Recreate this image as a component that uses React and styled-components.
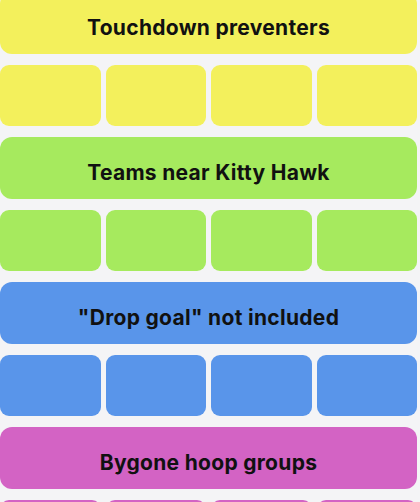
import React from 'react';
import styled, { createGlobalStyle } from 'styled-components';

const GlobalStyle = createGlobalStyle`
    html, body {
        margin: 0;
        padding: 0;
        background: #f4f4f6;
        overflow: hidden;
    }
`;

const Board = styled.div`
    width: 417px;
    margin-top: -8px;
    display: flex;
    flex-direction: column;
    gap: 11px;
    font-family: Inter, 'Liberation Sans', sans-serif;
`;

const Banner = styled.div`
    box-sizing: border-box;
    height: 62px;
    padding-top: 9px;
    border-radius: 12px;
    background: ${props => props.color};
    display: flex;
    align-items: center;
    justify-content: center;
    font-size: 21px;
    font-weight: 700;
    color: #111;
    letter-spacing: 0.3px;
`;

const TileRow = styled.div`
    display: grid;
    grid-template-columns: repeat(4, 1fr);
    gap: 5px;
`;

const Tile = styled.div`
    height: 61px;
    border-radius: 9px;
    background: ${props => props.color};
`;

const groups = [
    { title: 'Touchdown preventers', color: '#f3f05c' },
    { title: 'Teams near Kitty Hawk', color: '#a6ea5e' },
    { title: '"Drop goal" not included', color: '#5995ea' },
    { title: 'Bygone hoop groups', color: '#d363c4' },
];

export default function App() {
    return (
        <>
            <GlobalStyle />
            <Board>
                {groups.map(group => (
                    <React.Fragment key={group.title}>
                        <Banner color={group.color}>{group.title}</Banner>
                        <TileRow>
                            {[0, 1, 2, 3].map(i => (
                                <Tile key={i} color={group.color} />
                            ))}
                        </TileRow>
                    </React.Fragment>
                ))}
            </Board>
        </>
    );
}
